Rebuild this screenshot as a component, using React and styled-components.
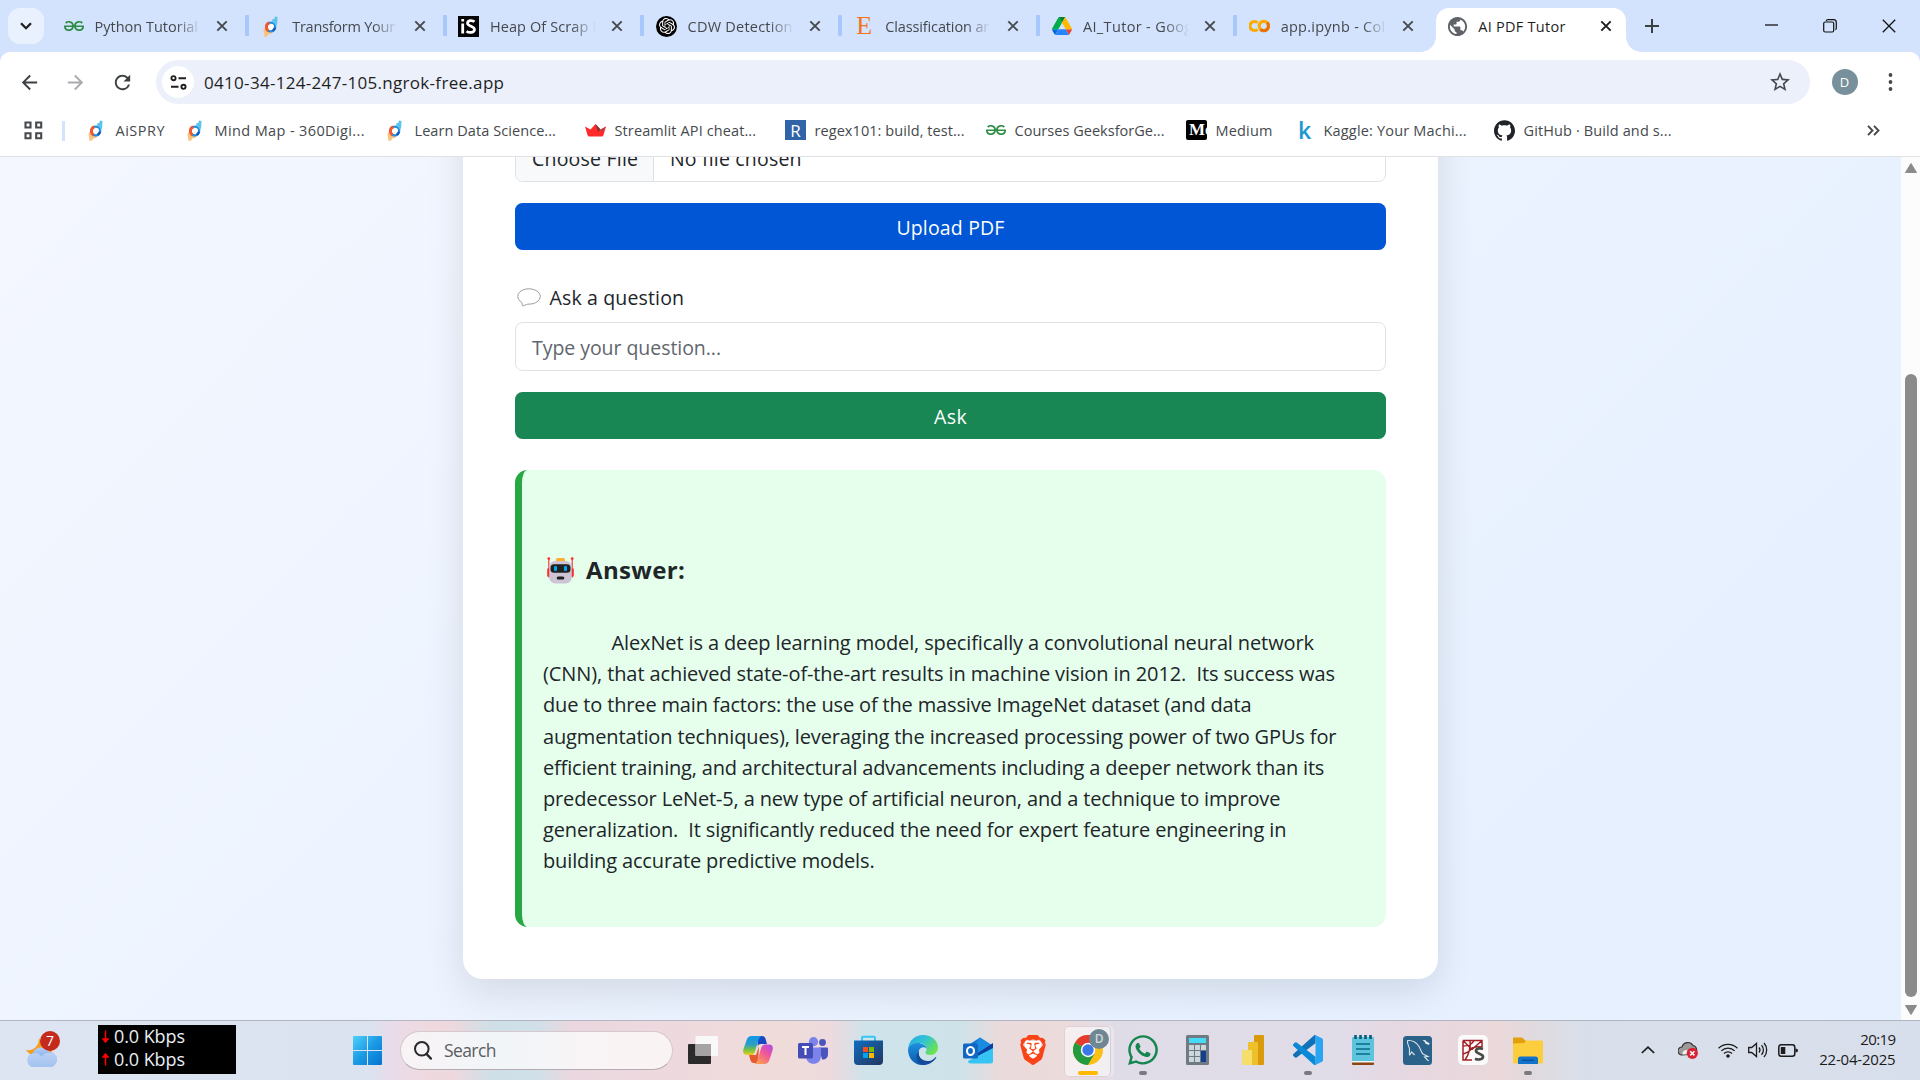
import React from "react";
import styled, { createGlobalStyle, css } from "styled-components";
import { SiGeeksforgeeks, SiOpenai, SiGithub, SiBrave } from "react-icons/si";
import { FaWhatsapp } from "react-icons/fa";
import { MdArrowBack, MdArrowForward, MdRefresh, MdStarBorder, MdPublic } from "react-icons/md";

const Global = createGlobalStyle`
  * { box-sizing: border-box; }
  body {
    margin: 0;
    overflow: hidden;
    font-family: "Open Sans", "Noto Sans", sans-serif;
    color: #212529;
  }
  svg { display: block; flex: none; }
`;

/* ---------- shared ---------- */

const Desktop = styled.div`
  width: 1920px;
  height: 1080px;
  display: flex;
  flex-direction: column;
  overflow: hidden;
`;

const Label = styled.span`
  white-space: pre;
  letter-spacing: ${(p) => p.$ls || 0}px;
`;

const Glyph = styled.span`
  display: flex;
  align-items: center;
  justify-content: center;
  flex: none;
  width: ${(p) => p.$w || 21}px;
  height: ${(p) => p.$h || 21}px;
  color: ${(p) => p.$color || "inherit"};
`;

/* ---------- tab strip ---------- */

const TabStrip = styled.header`
  height: 52px;
  background: #d3e2fd;
  display: flex;
  align-items: flex-start;
  flex: none;
`;

const TabSearch = styled.button`
  width: 36px;
  height: 36px;
  margin: 8px 8px 0;
  padding: 0;
  border: 0;
  border-radius: 12px;
  background: #eaf1fe;
  display: flex;
  align-items: center;
  justify-content: center;
`;

const Tab = styled.div`
  position: relative;
  width: 190px;
  height: 44px;
  margin: 8px 7.7px 0 0;
  padding-left: 11px;
  display: flex;
  align-items: center;
  font-size: 14.5px;
  color: #45494d;
  ${(p) =>
    p.$active
      ? css`
          background: #fff;
          border-radius: 13px 13px 0 0;
          color: #1f1f1f;
          &::before,
          &::after {
            content: "";
            position: absolute;
            bottom: 0;
            width: 15px;
            height: 15px;
          }
          &::before {
            right: 100%;
            background: radial-gradient(circle at 0 0, transparent 14.5px, #fff 15px);
          }
          &::after {
            left: 100%;
            background: radial-gradient(circle at 100% 0, transparent 14.5px, #fff 15px);
          }
        `
      : ""}
  ${(p) =>
    p.$divider
      ? css`
          &::after {
            content: "";
            position: absolute;
            left: 193px;
            top: 7px;
            width: 4px;
            height: 21px;
            border-radius: 1px;
            background: #a8c7fa;
          }
        `
      : ""}
`;

const TabIcon = styled(Glyph)`
  margin-bottom: 8px;
`;

const TabTitle = styled.span`
  width: 107px;
  margin: 0 0 7px 10.5px;
  overflow: hidden;
  white-space: pre;
  letter-spacing: ${(p) => p.$ls}px;
  ${(p) => (p.$fade ? "mask-image: linear-gradient(to right, #000 76%, transparent 99%);" : "")}
`;

const TabClose = styled.span`
  width: 24px;
  margin: 0 0 8px 8.5px;
  display: flex;
  justify-content: center;
`;

const NewTab = styled.span`
  margin: 19px 0 0 11.5px;
`;

const WindowButtons = styled.div`
  margin-left: auto;
  padding-right: 1.5px;
  display: flex;
  height: 51px;
`;

const WindowButton = styled.span`
  width: 59px;
  display: flex;
  align-items: center;
  justify-content: center;
`;

/* ---------- toolbar ---------- */

const Toolbar = styled.div`
  height: 60px;
  flex: none;
  background: #fff;
  border-radius: 10px 10px 0 0;
  display: flex;
  align-items: center;
  padding: 0 14px 0 11.5px;
`;

const ToolbarBacking = styled.div`
  background: #d3e2fd;
  flex: none;
`;

const NavButton = styled.span`
  width: 35px;
  margin-right: 11.5px;
  display: flex;
  justify-content: center;
  color: ${(p) => (p.$off ? "#a9abae" : "#3c4043")};
`;

const Omnibox = styled.div`
  width: 1654px;
  height: 44px;
  margin-left: 4.5px;
  padding: 0 18px 0 6.5px;
  border-radius: 22px;
  background: #ecf0fa;
  display: flex;
  align-items: center;
  color: #1f1f1f;
  font-size: 17px;
`;

const SiteInfo = styled.span`
  width: 32px;
  height: 32px;
  margin-right: 10px;
  border-radius: 50%;
  background: #fff;
  display: flex;
  align-items: center;
  justify-content: center;
`;

const StarSlot = styled.span`
  margin-left: auto;
  color: #45494d;
`;

const Avatar = styled.span`
  width: 26px;
  height: 26px;
  margin-left: 22px;
  border-radius: 50%;
  background: #78909c;
  color: #fff;
  font-size: 13px;
  display: flex;
  align-items: center;
  justify-content: center;
`;

const MenuDots = styled.span`
  margin-left: 30.5px;
`;

/* ---------- bookmarks ---------- */

const Bookmarks = styled.nav`
  height: 45px;
  flex: none;
  background: #fff;
  border-bottom: 1px solid #dfe1e4;
  display: flex;
  align-items: center;
  padding: 0 0 9px 24px;
  font-size: 14.5px;
  color: #45494d;
`;

const BookmarkDivider = styled.span`
  width: 3px;
  height: 20px;
  margin: 14px 21px 11px 19px;
  background: #d3e2fd;
`;

const BookmarkItem = styled.span`
  width: ${(p) => p.$w}px;
  height: 24px;
  margin-top: 1px;
  display: flex;
  align-items: center;
  gap: 8.5px;
`;

const MoreBookmarks = styled.span`
  margin: 1px 40px 0 auto;
`;

/* ---------- page ---------- */

const Page = styled.div`
  height: 863px;
  flex: none;
  display: flex;
  overflow: hidden;
`;

const Viewport = styled.main`
  flex: 1;
  height: 863px;
  overflow: hidden;
  display: flex;
  justify-content: center;
  align-items: flex-start;
  background: linear-gradient(135deg, #f4f7ff 0%, #e6f0ff 85%);
`;

const Card = styled.section`
  width: 975px;
  height: 882px;
  margin-top: -60px;
  padding: 37.5px 52px 52px;
  border-radius: 20px;
  background: #fff;
  box-shadow: 0 12px 38px rgba(0, 0, 0, 0.11);
  display: flex;
  flex-direction: column;
  font-size: 19.5px;
`;

const FileInput = styled.div`
  height: 47.5px;
  flex: none;
  border: 1px solid #dee2e6;
  border-radius: 7.5px;
  display: flex;
  align-items: center;
  overflow: hidden;
`;

const FileButton = styled.span`
  width: 138px;
  height: 100%;
  padding-left: 16px;
  margin-right: 16px;
  border-right: 1px solid #dee2e6;
  background: #f8f9fa;
  display: flex;
  align-items: center;
`;

const ActionButton = styled.button`
  height: 47px;
  flex: none;
  margin-top: 21px;
  padding: 2px 0 0;
  border: 0;
  border-radius: 7.5px;
  background: ${(p) => p.$color};
  color: #fff;
  font: inherit;
`;

const FieldLabel = styled.label`
  height: 30px;
  margin: 32px 0 10px;
  padding-left: 2px;
  display: flex;
  align-items: center;
  gap: 8.5px;
`;

const TextField = styled.div`
  height: 49px;
  flex: none;
  border: 1px solid #dee2e6;
  border-radius: 7.5px;
  padding: 2px 16px 0;
  display: flex;
  align-items: center;
  color: #5f666d;
`;

const Answer = styled.article`
  height: 457px;
  flex: none;
  margin-top: 31px;
  padding: 81px 0 0 21px;
  border-left: 7px solid #28a745;
  border-radius: 12.5px;
  background: #e5ffec;
  font-size: 20px;
  line-height: 31.2px;
`;

const AnswerTitle = styled.h5`
  height: 38px;
  margin: 0 0 38px;
  padding-left: 4px;
  display: flex;
  align-items: center;
  gap: 12px;
  font-size: 24px;
  font-weight: 700;
`;

const AnswerLine = styled.div`
  white-space: pre;
  padding-left: ${(p) => p.$indent || 0}px;
  letter-spacing: ${(p) => p.$ls}px;
`;

const Scrollbar = styled.div`
  width: 19px;
  height: 863px;
  padding: 6px 0 5px;
  background: #fcfcfc;
  display: flex;
  flex-direction: column;
  align-items: center;
`;

const ScrollThumb = styled.div`
  width: 12px;
  height: 624px;
  margin: 201px 0 8px;
  border-radius: 6px;
  background: #8b8b8b;
`;

/* ---------- taskbar ---------- */

const Taskbar = styled.footer`
  height: 60px;
  flex: none;
  border-top: 1px solid #b3b5bf;
  padding-bottom: 1px;
  display: flex;
  align-items: center;
  background: linear-gradient(
    to right,
    #dde4f2 0, #dbe2f0 370px, #e9dcea 392px, #efd9df 430px, #ecd8de 455px, #d0dfe7 490px,
    #cfe0e8 535px, #ead7df 570px, #efdadd 720px, #efdcd9 780px, #eddade 830px, #cfe3ea 865px,
    #cde3e9 960px, #eadadb 1000px, #ecdbdb 1060px, #dfdce8 1120px, #e0dce8 1340px, #e6d8e2 1400px,
    #ead8da 1500px, #dfdadf 1535px, #d9dfea 1580px, #d8dfec 1920px
  );
`;

const Weather = styled.div`
  width: 38px;
  margin: 0 0 1px 25px;
`;

const NetMeter = styled.div`
  width: 138px;
  height: 49px;
  margin: 0 0 2px 35px;
  background: #000;
  color: #e8eef5;
  font-size: 18px;
  display: grid;
  grid-template-rows: 23px 23px;
  padding-left: 4px;
`;

const NetRow = styled.div`
  display: flex;
  align-items: center;
  gap: 5px;
`;

const StartButton = styled.div`
  width: 29px;
  margin-left: 117px;
`;

const SearchBox = styled.div`
  width: 273px;
  height: 39px;
  margin-left: 17.5px;
  padding-left: 13px;
  border: 1px solid #d5c8ce;
  border-bottom-color: #b5abb2;
  border-radius: 20px;
  background: linear-gradient(to right, #f9f3f5, #f2f5f8 30%, #f3f5f8 50%, #f9f4f5 66%, #faf3f4);
  display: flex;
  align-items: center;
  gap: 12.5px;
  color: #5b5d60;
  font-size: 17.5px;
`;

const Apps = styled.div`
  margin-left: 3.5px;
  display: flex;
`;

const AppSlot = styled.div`
  position: relative;
  width: 54.95px;
  height: 59px;
  display: flex;
  align-items: center;
  justify-content: center;
  &::before {
    content: "";
    position: absolute;
    display: ${(p) => (p.$active ? "block" : "none")};
    left: 3px;
    top: 5px;
    width: 45px;
    height: 49px;
    border-radius: 5px;
    background: rgba(255, 255, 255, 0.55);
    border: 1px solid #e0d2d4;
    border-right-color: #d8cdd2;
    box-shadow: 3px 0 0 rgba(255, 255, 255, 0.3);
  }
  &::after {
    content: "";
    position: absolute;
    display: ${(p) => (p.$running || p.$active ? "block" : "none")};
    bottom: 5px;
    left: ${(p) => (p.$active ? 17.5 : 23.5)}px;
    width: ${(p) => (p.$active ? 20 : 8)}px;
    height: 4px;
    border-radius: 2px;
    background: ${(p) => (p.$active ? "#ffb900" : "#7b7980")};
  }
  svg { position: relative; }
`;

const ProfileBadge = styled.span`
  position: absolute;
  left: 28.5px;
  top: 8px;
  width: 20px;
  height: 20px;
  border-radius: 50%;
  background: #6f8793;
  color: #cfd8dc;
  font-size: 12px;
  font-weight: 600;
  display: flex;
  align-items: center;
  justify-content: center;
`;

const Tray = styled.div`
  margin-left: auto;
  padding: 0 24.5px 0 0;
  display: flex;
  align-items: center;
`;

const TrayIcon = styled.span`
  margin-right: ${(p) => p.$gap}px;
`;

const Clock = styled.div`
  width: 78px;
  margin-bottom: 2px;
  text-align: right;
  font-size: 15px;
  line-height: 20px;
  color: #1b1b1b;
`;

/* ---------- drawings ---------- */

const Cross = ({ color = "#45494d", size = 12 }) => (
  <svg width={size} height={size} viewBox="0 0 12 12">
    <path d="M1.3 1.3 10.7 10.7M10.7 1.3 1.3 10.7" stroke={color} strokeWidth="1.9" />
  </svg>
);

const Spry = () => (
  <svg width="17" height="21" viewBox="0 0 17 21">
    <path d="M1.500 12c-1.500 2-1 3.500-.5 4.500L1.500 21l3-.8.5-1.700 3.500-.8.5-1.700C5 16 3 14.500 1.500 12z" fill="#fac27c" />
    <circle cx="7.800" cy="11" r="4.400" fill="#fff" stroke="#1d8fdc" strokeWidth="2.200" />
    <path d="M5.500 15A4.600 4.600 0 0 1 6.200 6.900" fill="none" stroke="#f4572b" strokeWidth="2.900" />
    <path d="M9.600 14.800a4.400 4.400 0 0 0 2.300-3" fill="none" stroke="#1b56b8" strokeWidth="2.400" />
    <path d="M9 6 9.500 3l1.700.3L12 .5l2.500.5L14.300 6c0 2-.8 3-1.300 4.500C12.300 8 11 6.500 9 6z" fill="#5cc3ee" />
  </svg>
);

const Scrap = () => (
  <svg width="21" height="21" viewBox="0 0 21 21">
    <rect width="21" height="21" fill="#050505" />
    <rect x="3.300" y="3" width="2.800" height="2.500" fill="#fff" />
    <path d="M4.700 7.500v10" stroke="#fff" strokeWidth="2.800" />
    <path d="M16.500 5.800C14.500 4 9.500 4 9.500 7.200c0 3.300 7 2.800 7 6.300 0 3.300-5.500 3.700-8 1.700" fill="none" stroke="#fff" strokeWidth="2.700" />
  </svg>
);

const GptDisc = styled.span`
  width: 21px;
  height: 21px;
  border-radius: 50%;
  background: #000;
  color: #fff;
  display: flex;
  align-items: center;
  justify-content: center;
`;

const EtsyE = styled.span`
  font: 26px/26px "Liberation Serif", serif;
  color: #f1741e;
`;

const Drive = () => (
  <svg width="20" height="18" viewBox="0 0 87.3 78">
    <path d="m6.600 66.850 3.850 6.650c.8 1.400 1.950 2.500 3.300 3.300l13.750-23.800h-27.500c0 1.550.4 3.100 1.200 4.500z" fill="#0066da" />
    <path d="m43.650 25-13.750-23.800c-1.350.8-2.500 1.900-3.300 3.300l-25.400 44a9.060 9.060 0 0 0 -1.200 4.500h27.500z" fill="#00ac47" />
    <path d="m73.550 76.800c1.350-.8 2.500-1.900 3.300-3.300l1.600-2.750 7.650-13.250c.8-1.400 1.200-2.950 1.200-4.500h-27.502l5.852 11.500z" fill="#ea4335" />
    <path d="m43.650 25 13.750-23.800c-1.350-.8-2.900-1.200-4.500-1.200h-18.500c-1.600 0-3.150.45-4.500 1.200z" fill="#00832d" />
    <path d="m59.800 53h-32.300l-13.750 23.800c1.350.8 2.900 1.200 4.500 1.200h50.800c1.600 0 3.150-.45 4.500-1.200z" fill="#2684fc" />
    <path d="m73.400 26.500-12.700-22c-.8-1.400-1.950-2.500-3.300-3.300l-13.750 23.800 16.150 28h27.450c0-1.550-.4-3.100-1.200-4.500z" fill="#ffba00" />
  </svg>
);

const Colab = () => (
  <svg width="21" height="14" viewBox="0 0 21 14">
    <path d="M8.500 3.700a4.500 4.500 0 1 0 0 6.600" fill="none" stroke="#f9ab00" strokeWidth="3.200" />
    <circle cx="14.800" cy="7" r="4.600" fill="none" stroke="#f9ab00" strokeWidth="3.200" />
    <path d="M11.500 10.300a4.600 4.600 0 0 0 6.600-6.600" fill="none" stroke="#e8710a" strokeWidth="3.200" />
  </svg>
);

const Crown = () => (
  <svg width="21" height="13" viewBox="0 0 21 13">
    <path d="M0 2.500 5.500 5.500 10.500 0l5 5.500L21 2.500 18.500 11q-.5 1.500-2 1.500h-12Q3 12.500 2.500 11z" fill="#ff2b2b" />
    <path d="M10.500 0l5 5.500L13 8z" fill="#7d353b" />
    <path d="M15.500 5.500 21 2.500 17.500 8.500z" fill="#bd4043" />
  </svg>
);

const LetterTile = styled.span`
  width: 21px;
  height: 20px;
  padding-left: ${(p) => p.$shift || 0}px;
  border-radius: ${(p) => p.$r || 0}px;
  background: ${(p) => p.$bg};
  color: #fff;
  font: ${(p) => p.$font};
  display: flex;
  align-items: center;
  justify-content: ${(p) => (p.$shift ? "flex-start" : "center")};
  overflow: hidden;
`;

const KaggleK = styled.span`
  width: 21px;
  padding-left: 4px;
  color: #1b98cf;
  font: 600 23px/20px "Open Sans", sans-serif;
`;

const TuneIcon = () => (
  <svg width="17" height="15" viewBox="0 0 17 15" fill="none" stroke="#1f1f1f" strokeWidth="1.900">
    <circle cx="3.500" cy="3.200" r="2.100" />
    <path d="M8.500 3.200H16M1 11.800h7.500" />
    <circle cx="13.500" cy="11.800" r="2.100" />
  </svg>
);

const AppsGrid = () => (
  <svg width="19" height="19" viewBox="0 0 19 19" fill="none" stroke="#45494d" strokeWidth="2.100">
    <path d="M1.500 1.500h5v5h-5zM12.200 1.500h5v5h-5zM1.500 12.200h5v5h-5zM12.200 12.200h5v5h-5z" />
  </svg>
);

const SpeechBubble = () => (
  <svg width="24" height="19" viewBox="0 0 24 19">
    <path d="M4.600 14.200C2.200 12.800.8 10.700.8 8.400.8 4.200 5.600.8 11.800.8S23.200 4.200 23.200 8.400s-4.700 7.700-11.200 7.700c-1.700 0-3.200.6-5.900 1.800-.9 0-1.100-.2-.9-1 .2-1.200 0-2.200-.6-2.700z" fill="#fff" stroke="#9c9c9c" strokeWidth="1" />
  </svg>
);

const Robot = () => (
  <svg width="27" height="27" viewBox="0 0 27 27">
    <path d="M1.800 1.500v19M25.200 1.500v19" stroke="#f8454f" strokeWidth="1.300" />
    <circle cx="1.800" cy="1.600" r="1.400" fill="#f8312f" />
    <circle cx="25.200" cy="1.600" r="1.400" fill="#f8312f" />
    <path d="M1.500 11.500v8M25.500 11.500v8" stroke="#f8312f" strokeWidth="2.600" />
    <rect x="9" y="1" width="9" height="4" rx="1.500" fill="#ffb02e" />
    <rect x="2.300" y="4" width="22.400" height="22.500" rx="6" fill="#cdc4d6" />
    <rect x="3.500" y="7.300" width="20" height="8.400" rx="3.500" fill="#212121" />
    <rect x="7" y="9" width="3" height="5" rx="1" fill="#00a6ed" />
    <rect x="17" y="9" width="3" height="5" rx="1" fill="#00a6ed" />
    <rect x="9.700" y="19.500" width="7.600" height="3" rx="1.500" fill="#212121" />
  </svg>
);

const WeatherIcon = () => (
  <svg width="38" height="38" viewBox="0 0 38 38">
    <path d="M14 7c3 6 9 8 15 7-1 8-6 12-13 12-8 0-12-3-15-7 8 1 13-4 13-12z" fill="#f4a01f" />
    <path d="M8 36a7 7 0 0 1-.5-13.500 9.500 9.500 0 0 1 17-1.500A7.500 7.500 0 0 1 24.500 36z" fill="url(#cloud)" />
    <path d="M8 36a7 7 0 0 1-.5-13.500c4-1.500 7 0 9 3 3-4 8-4.500 12.500-3A7.500 7.500 0 0 1 24.500 36z" fill="#c9dcf7" opacity=".65" />
    <circle cx="25" cy="10" r="10" fill="#c42b1c" />
    <text x="25" y="15" textAnchor="middle" fontSize="14" fill="#fff">7</text>
    <defs>
      <linearGradient id="cloud" x1="0" y1="0" x2="0" y2="1">
        <stop offset="0" stopColor="#b4cff6" /><stop offset="1" stopColor="#5f92e0" />
      </linearGradient>
    </defs>
  </svg>
);

const NetArrow = ({ up }) => (
  <svg width="7" height="13" viewBox="0 0 7 13">
    <path d={up ? "M3.500 12.500V2M1 4 3.500 1 6 4z" : "M3.500.5V11M1 9 3.500 12 6 9z"} fill="#f00" stroke="#f00" strokeWidth="1.500" />
  </svg>
);

const WindowsLogo = () => (
  <svg width="29" height="29" viewBox="0 0 29 29">
    <path d="M0 1q0-1 1-1h13v14H0zM15 0h13q1 0 1 1v13H15zM0 15h14v14H1q-1 0-1-1zM15 15h14v13q0 1-1 1H15z" fill="url(#win)" />
    <defs>
      <linearGradient id="win" x1="0" y1="0" x2="1" y2="1">
        <stop offset="0" stopColor="#4fd0fb" /><stop offset=".5" stopColor="#1b9ae4" /><stop offset="1" stopColor="#0672d0" />
      </linearGradient>
    </defs>
  </svg>
);

const SearchGlyph = () => (
  <svg width="18" height="19" viewBox="0 0 18 19" fill="none" stroke="#26282b" strokeWidth="2" strokeLinecap="round">
    <circle cx="7.800" cy="7.800" r="6.800" /><path d="M12.600 13 16.800 17.500" strokeWidth="2.500" />
  </svg>
);

const TaskView = () => (
  <svg width="30" height="28" viewBox="0 0 30 28">
    <rect x="0" y="8" width="23" height="20" rx="1" fill="#2b2b2b" />
    <rect x="7.500" y="0" width="22.500" height="20" rx="1" fill="#f8f8f8" />
    <rect x="7.500" y="8" width="15.500" height="12" fill="#a5a3a3" />
  </svg>
);

const Copilot = () => (
  <svg width="30" height="28" viewBox="0 0 30 28">
    <defs>
      <linearGradient id="cpA" x1="0" y1="0" x2="0" y2="1">
        <stop offset="0" stopColor="#1097e8" /><stop offset=".45" stopColor="#2b9fc4" /><stop offset=".7" stopColor="#6cbf4a" /><stop offset="1" stopColor="#f0cd1b" />
      </linearGradient>
      <linearGradient id="cpB" x1="1" y1="0" x2=".3" y2="1">
        <stop offset="0" stopColor="#a94bec" /><stop offset=".5" stopColor="#f0569a" /><stop offset="1" stopColor="#fb9c55" />
      </linearGradient>
    </defs>
    <path d="M15 0h4c2 0 3 1 3.600 3L24 8h-6c-2 0-3 1-3.500 2.500z" fill="#1747c5" />
    <path d="M6 19h7l3-9-1 17h-4c-2 0-3-1-3.600-3z" fill="#e8582e" />
    <path d="M9 0h9.500c-2 1-2.700 3-3.300 5l-3.400 11c-.8 2.500-2 3-4 3H4c-3.500 0-4.500-2.500-3.500-6L3.600 4C4.500 1.500 6 0 9 0z" fill="url(#cpA)" />
    <path d="M21 28h-9.500c2-1 2.700-3 3.300-5l3.400-11c.8-2.500 2-3.500 4-3.500H26c3.500 0 4.500 2.500 3.500 6L26.400 24c-.9 2.500-2.400 4-5.400 4z" fill="url(#cpB)" />
  </svg>
);

const Teams = () => (
  <svg width="30" height="27" viewBox="0 0 30 27">
    <circle cx="24.500" cy="5.500" r="3.400" fill="#4b53bc" />
    <path d="M21 10.500h8q1 0 1 1V17c0 4-3 6-6 5.500z" fill="#4b53bc" />
    <circle cx="15.500" cy="4.700" r="4.600" fill="#7b83eb" />
    <path d="M9 10.500h12.500q1.500 0 1.500 1.500v7c0 5-3.500 7.800-7.500 7.800S8 24 8 19z" fill="#7b83eb" />
    <rect x="0" y="6" width="15" height="15.500" rx="1.500" fill="#454cb5" />
    <path d="M4 10h7M7.500 10v8" stroke="#fff" strokeWidth="2" />
  </svg>
);

const Store = () => (
  <svg width="29" height="30" viewBox="0 0 29 30">
    <defs>
      <linearGradient id="st" x1="0" y1="0" x2="1" y2="1"><stop offset="0" stopColor="#0e6dc0" /><stop offset="1" stopColor="#24365f" /></linearGradient>
    </defs>
    <path d="M8 7V3q0-1.300 1.300-1.300h10.400Q21 1.700 21 3v4" fill="none" stroke="#36c5f5" strokeWidth="2" />
    <path d="M0 5.500h29V26q0 4-4 4H4q-4 0-4-4z" fill="url(#st)" />
    <path d="M9 12h5v5H9z" fill="#f25022" /><path d="M15 12h5v5h-5z" fill="#7fba00" />
    <path d="M9 18h5v5H9z" fill="#00a4ef" /><path d="M15 18h5v5h-5z" fill="#ffb900" />
  </svg>
);

const Edge = () => (
  <svg width="30" height="30" viewBox="0 0 30 30">
    <defs>
      <linearGradient id="edA" x1="0" y1="0" x2="1" y2=".6"><stop offset="0" stopColor="#2aa5e0" /><stop offset=".5" stopColor="#2fc3d8" /><stop offset="1" stopColor="#6be24f" /></linearGradient>
      <linearGradient id="edB" x1="0" y1="0" x2="0" y2="1"><stop offset="0" stopColor="#1d8fe0" /><stop offset="1" stopColor="#0d5cae" /></linearGradient>
    </defs>
    <path d="M0 14C1 5 7.500 0 15 0c9 0 15 6 15 12.500 0 4.500-3.500 7.500-7.500 7.500-3.500 0-5-1.300-5-2.300 0-.8 1.200-1.500 1.200-3.700C18.700 10.500 15 8 10.500 8 5 8 1.500 11 0 14z" fill="url(#edA)" />
    <path d="M0 14.500C1 10.500 5 8 9.500 8c4.500 0 9 2.500 9.200 6-1.500-2.500-7-2.500-8 2.500-1 6 4 11 9.300 11-2 1.700-3.500 2.500-6 2.500C6 30 0 23 0 14.500z" fill="url(#edB)" />
    <path d="M11 16c-1.500 6 3.500 10.500 9.500 10 3 0 5.500-2 7-3.800.6-.6 1 0 .6.700C25.500 27 20.500 30 15 30 8 29 6.500 20.500 11 16z" fill="#134a9c" />
  </svg>
);

const Outlook = () => (
  <svg width="30" height="27" viewBox="0 0 30 27">
    <path d="M4 9 17 .5 30 9v4L17 22 4 16z" fill="#1277d3" />
    <path d="M17 .5 30 9 17 17 8 12z" fill="#1a8be0" />
    <path d="M30 6v7L16 22l-4-4z" fill="#0b3f9e" />
    <path d="M30 11v13q0 2.500-2.500 2.500H8Q5 26.500 5 24z" fill="#35c4f3" />
    <rect x="0" y="6.500" width="15" height="15" rx="1.500" fill="#1168c4" />
    <ellipse cx="7.500" cy="14" rx="3.500" ry="4" fill="none" stroke="#fff" strokeWidth="2.100" />
  </svg>
);

const BraveMark = styled.span`
  position: relative;
  display: flex;
  color: #fb4318;
  &::before {
    content: "";
    position: absolute;
    inset: 6px 7px 7px;
    background: #fff;
  }
`;

const ChromeLogo = () => (
  <svg width="30" height="30" viewBox="0 0 30 30">
    <circle cx="15" cy="15" r="15" fill="#fbc016" />
    <path d="M15 15 2 7.500A15 15 0 0 1 28 7.500L28 8z" fill="#e33b2e" />
    <path d="M2 7.500A15 15 0 0 0 15 30l6.500-11.200L15 15z" fill="#25993e" />
    <circle cx="15" cy="15" r="7.200" fill="#fff" />
    <circle cx="15" cy="15" r="5.700" fill="#3b78e7" />
  </svg>
);

const Calculator = () => (
  <svg width="23" height="30" viewBox="0 0 23 30">
    <rect width="23" height="30" rx="1.500" fill="#6f7a82" />
    <rect x="3" y="3" width="17" height="5" fill="#46dcf7" />
    <path d="M3 10h5v5H3zM9 10h5v5H9zM15 10h5v5h-5zM3 16h5v5H3zM9 16h5v5H9zM3 22h5v5H3zM9 22h5v5H9z" fill="#cdd6dc" />
    <rect x="15" y="16" width="5" height="11" fill="#12408f" />
  </svg>
);

const PowerBi = () => (
  <svg width="22" height="30" viewBox="0 0 22 30">
    <rect x="12" width="10" height="30" rx="1" fill="#d99a0b" />
    <path d="M6 8q0-1 1-1h8q1 0 1 1v22H6z" fill="#edc02c" />
    <path d="M0 16q0-1 1-1h8q1 0 1 1v14H1q-1 0-1-1z" fill="#f6de6b" />
  </svg>
);

const VsCode = () => (
  <svg width="30" height="30" viewBox="0 0 24 24">
    <path d="M18.210.21a1.494 1.494 0 0 0-1.705.29L.326 15.260a1 1 0 0 0 .001 1.479L1.650 17.940a1 1 0 0 0 1.276.057L18.004 6.552z" fill="#0f72b8" />
    <path d="M18.210 23.790a1.494 1.494 0 0 1-1.705-.29L.326 8.740a1 1 0 0 1 .001-1.479L1.650 6.060a1 1 0 0 1 1.276-.057L18.004 17.448z" fill="#0a89d6" />
    <path d="M23.150 2.587 18.210.21q-.5-.2-.9-.1l.7 1.300v21.200l-.7 1.300q.5.1.9-.1l4.942-2.377A1.500 1.500 0 0 0 24 20.060V3.939a1.500 1.500 0 0 0-.85-1.352z" fill="#2aa5f3" />
  </svg>
);

const Notepad = () => (
  <svg width="22" height="30" viewBox="0 0 22 30">
    <rect x="0" y="25" width="22" height="5" rx="1" fill="#8a4513" />
    <rect x="0" y="24" width="22" height="3.500" fill="#f3f3f3" />
    <path d="M0 3q0-1 1-1h20q1 0 1 1v23H0z" fill="#5cc5dd" />
    <path d="M4 9h14M4 14h14M4 19h14" stroke="#0b6a88" strokeWidth="1.700" />
    <path d="M3.500 0v4M8.500 0v4M13.500 0v4M18.500 0v4" stroke="#0b5a78" strokeWidth="2.600" />
  </svg>
);

const MySql = () => (
  <svg width="29" height="29" viewBox="0 0 29 29">
    <rect width="29" height="29" rx="3.500" fill="#2b6289" />
    <path d="M4.500 4.500c5-.5 9 2 11.500 6 1.700 3 2 5.500 4 7.500l5 2.500-3.500.5 4 4M4.500 4.500C4 8 6 10 6.500 13c.3 2-.8 4 .3 6l1.800-3 3 3" fill="none" stroke="#d5e3ed" strokeWidth="1.100" />
    <path d="M19.500 4l3 .2 1.500 1.800 2.500 1-.5 2-3.500-1.200-.7-1.800z" fill="#e4eef5" />
  </svg>
);

const Spyder = () => (
  <svg width="30" height="30" viewBox="0 0 30 30">
    <rect width="30" height="30" rx="5" fill="#fbfafa" />
    <path d="M5 5.500h19v7M5 5.500V25h9M5 11c5 0 9-1 11-5.500M5 19c3-1 7-2 9-6 3-1 6-2 10-1M12 5.500C13 11 11 20 7 25M5 5.500l9 9M24 5.500l-10 9" fill="none" stroke="#a32024" strokeWidth="1.500" />
    <path d="M25 14c-3-1.200-7-.8-7 2s7 2.500 7 5.500-4.500 3.700-8 2.200" fill="none" stroke="#4a4a4a" strokeWidth="2.700" />
  </svg>
);

const Explorer = () => (
  <svg width="30" height="27" viewBox="0 0 30 27">
    <path d="M0 1.500Q0 .5 1 .5h8l4 3.500h16q1 0 1 1v3H0z" fill="#e3a008" />
    <path d="M0 6.500 11 6l2.500-2.500H29q1 0 1 1V25q0 1.500-1.500 1.500h-27Q0 26.500 0 25z" fill="#fccd3c" />
    <path d="M5 27v-5q0-2.500 2.500-2.500h15Q25 19.500 25 22v5z" fill="#1173c9" />
    <path d="M9 23.300h12" stroke="#0a4f94" strokeWidth="1.300" />
  </svg>
);

/* ---------- data ---------- */

const geeks = <SiGeeksforgeeks size={20} color="#2f8d46" />;

const tabs = [
  { icon: geeks, title: "Python Tutorial", ls: 0 },
  { icon: <Spry />, title: "Transform Your", ls: -0.25 },
  { icon: <Scrap />, title: "Heap Of Scrap I", ls: 0.11 },
  { icon: <GptDisc><SiOpenai size={16} /></GptDisc>, title: "CDW Detection", ls: 0.23 },
  { icon: <EtsyE>E</EtsyE>, title: "Classification ar", ls: -0.13 },
  { icon: <Drive />, title: "AI_Tutor - Goog", ls: 0.35 },
  { icon: <Colab />, title: "app.ipynb - Col", ls: 0.26 },
  { icon: <MdPublic size={23} color="#5f6368" />, title: "AI PDF Tutor", ls: 0.26, active: true },
];

const bookmarks = [
  { icon: <Spry />, title: "AiSPRY", ls: 0.49, w: 99 },
  { icon: <Spry />, title: "Mind Map - 360Digi...", ls: 0.38, w: 200 },
  { icon: <Spry />, title: "Learn Data Science...", ls: 0.07, w: 200 },
  { icon: <Crown />, title: "Streamlit API cheat...", ls: 0.11, w: 200 },
  { icon: <LetterTile $bg="#3064a8" $font="17px 'Open Sans'">R</LetterTile>, title: "regex101: build, test...", ls: 0.07, w: 200 },
  { icon: geeks, title: "Courses GeeksforGe...", ls: 0.03, w: 201 },
  { icon: <LetterTile $bg="#000" $r={2} $shift={3} $font="700 17px 'Liberation Serif'">Me</LetterTile>, title: "Medium", ls: 0.19, w: 108 },
  { icon: <KaggleK>k</KaggleK>, title: "Kaggle: Your Machi...", ls: 0.18, w: 200 },
  { icon: <SiGithub size={21} color="#1f2328" />, title: "GitHub · Build and s...", ls: 0.12, w: 200 },
];

const answer = [
  ["AlexNet is a deep learning model, specifically a convolutional neural network", -0.122, 68.5],
  ["(CNN), that achieved state-of-the-art results in machine vision in 2012.  Its success was", -0.101],
  ["due to three main factors: the use of the massive ImageNet dataset (and data", -0.155],
  ["augmentation techniques), leveraging the increased processing power of two GPUs for", -0.132],
  ["efficient training, and architectural advancements including a deeper network than its", -0.185],
  ["predecessor LeNet-5, a new type of artificial neuron, and a technique to improve", -0.146],
  ["generalization.  It significantly reduced the need for expert feature engineering in", -0.131],
  ["building accurate predictive models.", -0.14],
];

const apps = [
  { icon: <TaskView /> },
  { icon: <Copilot /> },
  { icon: <Teams /> },
  { icon: <Store /> },
  { icon: <Edge /> },
  { icon: <Outlook /> },
  { icon: <BraveMark><SiBrave size={30} /></BraveMark> },
  { icon: <ChromeLogo />, active: true },
  { icon: <FaWhatsapp size={34} color="#15864f" />, running: true },
  { icon: <Calculator /> },
  { icon: <PowerBi /> },
  { icon: <VsCode />, running: true },
  { icon: <Notepad /> },
  { icon: <MySql /> },
  { icon: <Spyder /> },
  { icon: <Explorer />, running: true },
];

/* ---------- sections ---------- */

const BrowserChrome = () => (
  <>
    <TabStrip>
      <TabSearch>
        <svg width="12" height="8" viewBox="0 0 12 8"><path d="M1 1.200 6 6.200 11 1.200" fill="none" stroke="#1f1f1f" strokeWidth="2.300" /></svg>
      </TabSearch>
      {tabs.map((t, i) => (
        <Tab key={t.title} $active={t.active} $divider={i < 6}>
          <TabIcon $h={26}>{t.icon}</TabIcon>
          <TabTitle $ls={t.ls} $fade={!t.active}>{t.title}</TabTitle>
          <TabClose><Cross color={t.active ? "#1f1f1f" : "#45494d"} /></TabClose>
        </Tab>
      ))}
      <NewTab>
        <svg width="14" height="14" viewBox="0 0 14 14"><path d="M7 0v14M0 7h14" stroke="#3c4043" strokeWidth="2" /></svg>
      </NewTab>
      <WindowButtons>
        <WindowButton>
          <svg width="13" height="4" viewBox="0 0 13 4"><path d="M0 1h13" stroke="#111" strokeWidth="1.300" /></svg>
        </WindowButton>
        <WindowButton>
          <svg width="14" height="14" viewBox="0 0 14 14" fill="none" stroke="#111" strokeWidth="1.200">
            <rect x=".7" y="3" width="10" height="10" rx="1.500" /><path d="M3.200 1.800Q3.500.7 5 .7h5.500q2.800 0 2.800 2.800V9q0 1.300-1 1.600" />
          </svg>
        </WindowButton>
        <WindowButton>
          <svg width="14" height="14" viewBox="0 0 14 14"><path d="M.8.8 13.200 13.200M13.200.8.8 13.200" stroke="#111" strokeWidth="1.300" /></svg>
        </WindowButton>
      </WindowButtons>
    </TabStrip>
    <ToolbarBacking>
      <Toolbar>
        <NavButton><MdArrowBack size={23} /></NavButton>
        <NavButton $off><MdArrowForward size={23} /></NavButton>
        <NavButton><MdRefresh size={23} /></NavButton>
        <Omnibox>
          <SiteInfo><TuneIcon /></SiteInfo>
          <Label $ls={0.307}>0410-34-124-247-105.ngrok-free.app</Label>
          <StarSlot><MdStarBorder size={24} /></StarSlot>
        </Omnibox>
        <Avatar>D</Avatar>
        <MenuDots>
          <svg width="5" height="18" viewBox="0 0 5 18" fill="#45494d"><circle cx="2.500" cy="2" r="1.900" /><circle cx="2.500" cy="9" r="1.900" /><circle cx="2.500" cy="16" r="1.900" /></svg>
        </MenuDots>
      </Toolbar>
    </ToolbarBacking>
    <Bookmarks>
      <BookmarkItem $w={19}><AppsGrid /></BookmarkItem>
      <BookmarkDivider />
      {bookmarks.map((b) => (
        <BookmarkItem key={b.title} $w={b.w}>
          <Glyph>{b.icon}</Glyph>
          <Label $ls={b.ls}>{b.title}</Label>
        </BookmarkItem>
      ))}
      <MoreBookmarks>
        <svg width="13" height="11" viewBox="0 0 13 11" fill="none" stroke="#45494d" strokeWidth="1.900"><path d="M1 .8 5.500 5.500 1 10.200M7 .8l4.500 4.700L7 10.200" /></svg>
      </MoreBookmarks>
    </Bookmarks>
  </>
);

const TutorPage = () => (
  <Page>
    <Viewport>
      <Card>
        <FileInput>
          <FileButton><Label $ls={0.21}>Choose File</Label></FileButton>
          <Label $ls={0.18}>No file chosen</Label>
        </FileInput>
        <ActionButton $color="#0056d4"><Label $ls={0.16}>Upload PDF</Label></ActionButton>
        <FieldLabel><SpeechBubble /><Label $ls={0.15}>Ask a question</Label></FieldLabel>
        <TextField><Label $ls={-0.05}>Type your question...</Label></TextField>
        <ActionButton $color="#198754"><Label $ls={0.4}>Ask</Label></ActionButton>
        <Answer>
          <AnswerTitle><Robot /><Label $ls={0.37}>Answer:</Label></AnswerTitle>
          {answer.map(([text, ls, indent]) => (
            <AnswerLine key={text} $ls={ls} $indent={indent}>{text}</AnswerLine>
          ))}
        </Answer>
      </Card>
    </Viewport>
    <Scrollbar>
      <svg width="12" height="10" viewBox="0 0 12 10"><path d="M6 .5 11.500 9.500H.5z" fill="#8b8b8b" stroke="#8b8b8b" strokeLinejoin="round" /></svg>
      <ScrollThumb />
      <svg width="12" height="10" viewBox="0 0 12 10"><path d="M6 9.500.5.500h11z" fill="#8b8b8b" stroke="#8b8b8b" strokeLinejoin="round" /></svg>
    </Scrollbar>
  </Page>
);

const SystemTray = () => (
  <Tray>
    <TrayIcon $gap={23}>
      <svg width="14" height="8" viewBox="0 0 14 8"><path d="M.8 7 7 1.200 13.200 7" fill="none" stroke="#1b1b1b" strokeWidth="1.700" /></svg>
    </TrayIcon>
    <TrayIcon $gap={20}>
      <svg width="20" height="18" viewBox="0 0 20 18">
        <path d="M4 14a4 4 0 0 1 0-8A6 6 0 0 1 15 4.500 4.500 4.500 0 0 1 16 13z" fill="#9c9a9a" stroke="#333" strokeWidth="1.200" />
        <path d="M4.500 13.500Q4 9 9 9l5 4z" fill="#f1f1f1" />
        <circle cx="14.300" cy="12.300" r="5.600" fill="#d92532" />
        <path d="m12.200 10.200 4.200 4.200m0-4.200-4.200 4.200" stroke="#fff" strokeWidth="1.500" />
      </svg>
    </TrayIcon>
    <TrayIcon $gap={10}>
      <svg width="20" height="16" viewBox="0 0 20 16" fill="none" stroke="#1b1b1b" strokeWidth="1.300">
        <path d="M.6 6.200a13.300 13.300 0 0 1 18.800 0M3.300 8.900a9.500 9.500 0 0 1 13.400 0M6 11.500a5.700 5.700 0 0 1 8 0" />
        <circle cx="10" cy="14" r="1.800" fill="#1b1b1b" stroke="none" />
      </svg>
    </TrayIcon>
    <TrayIcon $gap={10}>
      <svg width="20" height="16" viewBox="0 0 20 16" fill="none" stroke="#1b1b1b" strokeWidth="1.300">
        <path d="M.7 5.500h3L8.500 1.500v13L3.700 10.500h-3zM11 5.500a4 4 0 0 1 0 5M13.500 3.200a7 7 0 0 1 0 9.600M16 1a10.500 10.500 0 0 1 0 14" />
      </svg>
    </TrayIcon>
    <TrayIcon $gap={20}>
      <svg width="20" height="13" viewBox="0 0 20 13">
        <rect x=".8" y=".8" width="16" height="11.400" rx="2.500" fill="none" stroke="#1b1b1b" strokeWidth="1.500" />
        <rect x="2.800" y="3" width="4.500" height="7" fill="#1b1b1b" />
        <path d="M17.500 4.500q2.500 0 2.500 2t-2.500 2z" fill="#1b1b1b" />
      </svg>
    </TrayIcon>
    <Clock>
      <div><Label $ls={-0.6}>20:19</Label></div>
      <div><Label $ls={-0.2}>22-04-2025</Label></div>
    </Clock>
  </Tray>
);

export default function App() {
  return (
    <Desktop>
      <Global />
      <BrowserChrome />
      <TutorPage />
      <Taskbar>
        <Weather><WeatherIcon /></Weather>
        <NetMeter>
          <NetRow><NetArrow /><Label $ls={-0.09}>0.0 Kbps</Label></NetRow>
          <NetRow><NetArrow up /><Label $ls={-0.09}>0.0 Kbps</Label></NetRow>
        </NetMeter>
        <StartButton><WindowsLogo /></StartButton>
        <SearchBox><SearchGlyph /><Label $ls={-0.6}>Search</Label></SearchBox>
        <Apps>
          {apps.map((a, i) => (
            <AppSlot key={i} $active={a.active} $running={a.running}>
              {a.icon}
              {a.active && <ProfileBadge>D</ProfileBadge>}
            </AppSlot>
          ))}
        </Apps>
        <SystemTray />
      </Taskbar>
    </Desktop>
  );
}
